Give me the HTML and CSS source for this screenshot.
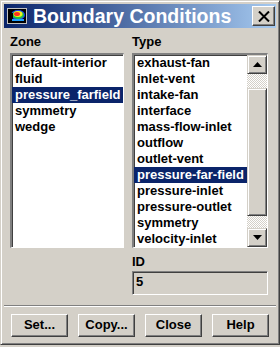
FILE: index.html
```html
<!DOCTYPE html>
<html lang="en">
<head>
    <meta charset="UTF-8">
    <title>Boundary Conditions</title>
    <link rel="stylesheet" href="styles.css">
</head>
<body>
    <div class="window">
        <div class="titlebar">
            <svg class="app-icon" width="20" height="16" viewBox="0 0 20 16">
                <rect x="0" y="0" width="20" height="16" fill="#c0c0c0"/>
                <rect x="1" y="1" width="18" height="14" fill="#000"/>
                <ellipse cx="11" cy="7" rx="7" ry="5" fill="#1a40ff"/>
                <ellipse cx="11" cy="7" rx="6" ry="4" fill="#20c040"/>
                <ellipse cx="11" cy="6" rx="4.5" ry="3" fill="#f0f020"/>
                <ellipse cx="10" cy="6" rx="3" ry="2" fill="#ff3020"/>
                <rect x="2" y="5" width="4" height="5" fill="#000"/>
                <rect x="5" y="11" width="12" height="2" fill="#20a0ff"/>
            </svg>
            <span class="title">Boundary Conditions</span>
            <div class="close">
                <svg width="12" height="11" viewBox="0 0 12 11">
                    <path d="M1 0.5 L11 10.5 M11 0.5 L1 10.5" stroke="#000" stroke-width="2"/>
                </svg>
            </div>
        </div>
        <div class="content">
            <div class="columns">
                <div class="col zone-col">
                    <div class="label">Zone</div>
                    <div class="list">
                        <div class="item">default-interior</div>
                        <div class="item">fluid</div>
                        <div class="item selected">pressure_farfield</div>
                        <div class="item">symmetry</div>
                        <div class="item">wedge</div>
                    </div>
                </div>
                <div class="col type-col">
                    <div class="label">Type</div>
                    <div class="list type-list">
                        <div class="items">
                            <div class="item">exhaust-fan</div>
                            <div class="item">inlet-vent</div>
                            <div class="item">intake-fan</div>
                            <div class="item">interface</div>
                            <div class="item">mass-flow-inlet</div>
                            <div class="item">outflow</div>
                            <div class="item">outlet-vent</div>
                            <div class="item selected">pressure-far-field</div>
                            <div class="item">pressure-inlet</div>
                            <div class="item">pressure-outlet</div>
                            <div class="item">symmetry</div>
                            <div class="item">velocity-inlet</div>
                        </div>
                        <div class="scrollbar">
                            <div class="sb-btn">
                                <svg width="9" height="5" viewBox="0 0 9 5"><path d="M4.5 0 L9 5 L0 5 Z" fill="#000"/></svg>
                            </div>
                            <div class="sb-track short"></div>
                            <div class="sb-thumb"></div>
                            <div class="sb-track short2"></div>
                            <div class="sb-btn">
                                <svg width="9" height="5" viewBox="0 0 9 5"><path d="M0 0 L9 0 L4.5 5 Z" fill="#000"/></svg>
                            </div>
                        </div>
                    </div>
                    <div class="label id-label">ID</div>
                    <div class="field">5</div>
                </div>
            </div>
            <div class="separator"></div>
            <div class="buttons">
                <div class="btn">Set...</div>
                <div class="btn">Copy...</div>
                <div class="btn">Close</div>
                <div class="btn">Help</div>
            </div>
        </div>
    </div>
</body>
</html>
```

FILE: styles.css
```css
body {
    margin: 0;
    background: #d4d0c8;
    font-family: "Liberation Sans", Arial, sans-serif;
}
.window {
    width: 280px;
    height: 345px;
    box-sizing: border-box;
    background: #d4d0c8;
    border-top: 1px solid #d4d0c8;
    border-left: 1px solid #d4d0c8;
    border-right: 1px solid #404040;
    border-bottom: 1px solid #404040;
    box-shadow: inset 1px 1px 0 #fff, inset -1px -1px 0 #808080;
    padding: 3px 3px 0 3px;
}
.titlebar {
    height: 24px;
    background: linear-gradient(to right, #0a246a, #a6caf0);
    display: flex;
    align-items: center;
    padding-left: 3px;
}
.app-icon {
    margin-right: 6px;
    flex-shrink: 0;
}
.title {
    color: #fff;
    font-weight: bold;
    font-size: 19.5px;
    white-space: nowrap;
    flex: 1;
}
.close {
    width: 23px;
    height: 20px;
    flex-shrink: 0;
    box-sizing: border-box;
    background: #d4d0c8;
    border-top: 1px solid #fff;
    border-left: 1px solid #fff;
    border-right: 1px solid #404040;
    border-bottom: 1px solid #404040;
    box-shadow: inset -1px -1px 0 #808080;
    display: flex;
    align-items: center;
    justify-content: center;
    margin-right: 1px;
}
.content {
    padding: 6px 6px 0 6px;
}
.columns {
    display: flex;
    gap: 8px;
}
.col {
    display: flex;
    flex-direction: column;
}
.zone-col {
    width: 114px;
}
.type-col {
    width: 136px;
}
.label {
    font-size: 13px;
    font-weight: bold;
    height: 19px;
    line-height: 16px;
}
.list {
    height: 195px;
    box-sizing: border-box;
    background: #fff;
    border-top: 2px solid #808080;
    border-left: 2px solid #808080;
    border-right: 1px solid #fff;
    border-bottom: 1px solid #fff;
    box-shadow: inset 1px 1px 0 #404040;
    overflow: hidden;
}
.item {
    font-size: 13px;
    font-weight: bold;
    height: 16px;
    line-height: 16px;
    padding-left: 3px;
    white-space: nowrap;
    overflow: hidden;
}
.selected {
    background: #0a246a;
    color: #fff;
}
.type-list {
    display: flex;
}
.items {
    flex: 1;
    min-width: 0;
}
.scrollbar {
    width: 20px;
    display: flex;
    flex-direction: column;
}
.sb-btn {
    height: 19px;
    box-sizing: border-box;
    background: #d4d0c8;
    border-top: 1px solid #d4d0c8;
    border-left: 1px solid #d4d0c8;
    border-right: 1px solid #404040;
    border-bottom: 1px solid #404040;
    box-shadow: inset 1px 1px 0 #fff, inset -1px -1px 0 #808080;
    display: flex;
    align-items: center;
    justify-content: center;
}
.sb-track {
    background-color: #fff;
    background-image: repeating-conic-gradient(#d4d0c8 0 25%, #fff 0 50%);
    background-size: 2px 2px;
}
.short {
    height: 14px;
}
.short2 {
    height: 12px;
}
.sb-thumb {
    flex: 1;
    box-sizing: border-box;
    background: #d4d0c8;
    border-top: 1px solid #d4d0c8;
    border-left: 1px solid #d4d0c8;
    border-right: 1px solid #404040;
    border-bottom: 1px solid #404040;
    box-shadow: inset 1px 1px 0 #fff, inset -1px -1px 0 #808080;
}
.id-label {
    margin-top: 6px;
    height: 17px;
}
.field {
    height: 24px;
    box-sizing: border-box;
    font-size: 13px;
    font-weight: bold;
    line-height: 20px;
    padding-left: 3px;
    border-top: 1px solid #808080;
    border-left: 1px solid #808080;
    border-right: 1px solid #fff;
    border-bottom: 1px solid #fff;
    box-shadow: inset 1px 1px 0 #404040, inset -1px -1px 0 #d4d0c8;
}
.separator {
    margin: 10px -6px 0 -6px;
    border-top: 1px solid #808080;
    border-bottom: 1px solid #fff;
}
.buttons {
    display: flex;
    gap: 10px;
    padding: 7px 0 0 1px;
}
.btn {
    width: 57px;
    height: 23px;
    box-sizing: border-box;
    font-size: 13px;
    font-weight: bold;
    text-align: center;
    line-height: 20px;
    background: #d4d0c8;
    border-top: 1px solid #fff;
    border-left: 1px solid #fff;
    border-right: 1px solid #404040;
    border-bottom: 1px solid #404040;
    box-shadow: inset -1px -1px 0 #808080;
}
```
